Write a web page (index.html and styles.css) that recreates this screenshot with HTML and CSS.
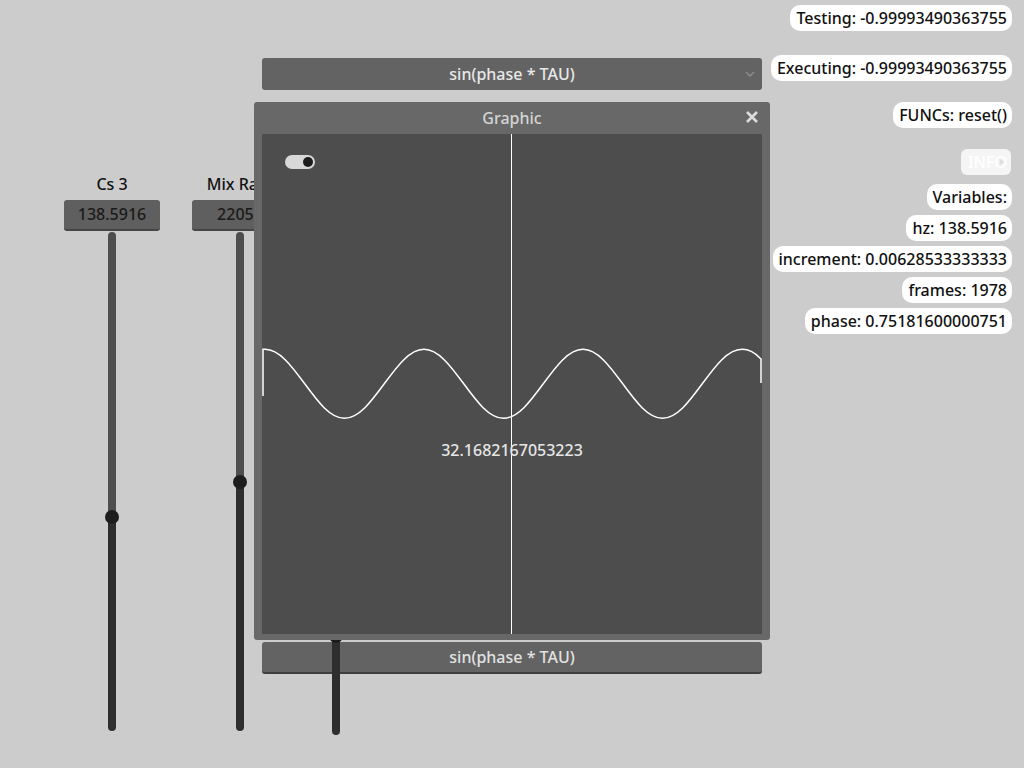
FILE: index.html
```html
<!DOCTYPE html>
<html>
<head>
<meta charset="utf-8">
<link rel="stylesheet" href="styles.css">
</head>
<body>
<div class="stage">
  <div class="layer center-layer">
    <div class="dropdown">
      <span class="dd-text">sin(phase * TAU)</span>
      <svg class="chevron" width="10" height="6" viewBox="0 0 10 6"><path d="M1 1 L5 5 L9 1" fill="none" stroke="#8c8c8c" stroke-width="1.5"/></svg>
    </div>
    <div class="bottom-btn">sin(phase * TAU)</div>
  </div>

  <div class="layer sliders-layer">
    <div class="slider-group">
      <div class="s-label">Cs 3</div>
      <div class="s-value">138.5916</div>
      <div class="track">
        <div class="track-upper" style="height:285px"></div>
        <div class="knob"></div>
        <div class="track-lower"></div>
      </div>
    </div>
    <div class="slider-group g2">
      <div class="s-label">Mix Rate</div>
      <div class="s-value">22050</div>
      <div class="track">
        <div class="track-upper" style="height:250px"></div>
        <div class="knob"></div>
        <div class="track-lower"></div>
      </div>
    </div>
    <div class="slider-group g3">
      <div class="s-label">Amp</div>
      <div class="s-value">0.5</div>
      <div class="track">
        <div class="track-upper" style="height:400px"></div>
        <div class="knob"></div>
        <div class="track-lower"></div>
      </div>
    </div>
  </div>

  <div class="layer info-layer">
    <div class="pill p-testing">Testing: -0.99993490363755</div>
    <div class="pill p-exec">Executing: -0.99993490363755</div>
    <div class="pill p-funcs">FUNCs: reset()</div>
    <div class="pill p-info"><span class="info-text">INFO</span><svg class="info-ic" width="6" height="8" viewBox="0 0 6 8"><path d="M0.5 0.5 L5.5 4 L0.5 7.5 Z" fill="#dedede"/></svg></div>
    <div class="pill p-vars">Variables:</div>
    <div class="pill p-var">hz: 138.5916</div>
    <div class="pill p-var">increment: 0.00628533333333</div>
    <div class="pill p-var">frames: 1978</div>
    <div class="pill p-var">phase: 0.75181600000751</div>
  </div>

  <div class="window">
    <div class="win-title">
      <span>Graphic</span>
      <svg class="close" width="14" height="14" viewBox="0 0 14 14"><path d="M2 2 L12 12 M12 2 L2 12" stroke="#dcdcdc" stroke-width="2.6" stroke-linecap="butt"/></svg>
    </div>
    <div class="panel">
      <svg class="plot" width="500" height="500" viewBox="262 134 500 500">
        <line x1="511.5" y1="134" x2="511.5" y2="634" stroke="#ffffff" stroke-width="1"/>
        <path d="M263 396 V349.3 H265 c14.39 0 26.77 16.81 39.75 34.5 s25.36 34.5 39.75 34.5 s26.77 -16.81 39.75 -34.5 s25.36 -34.5 39.75 -34.5 s26.77 16.81 39.75 34.5 s25.36 34.5 39.75 34.5 s26.77 -16.81 39.75 -34.5 s25.36 -34.5 39.75 -34.5 s26.77 16.81 39.75 34.5 s25.36 34.5 39.75 34.5 s26.77 -16.81 39.75 -34.5 s25.36 -34.5 39.75 -34.5 C748 349.3 755 352.5 761 359 V383" fill="none" stroke="#ffffff" stroke-width="1.5"/>
      </svg>
      <div class="toggle"><div class="toggle-knob"></div></div>
      <div class="readout">32.1682167053223</div>
    </div>
  </div>
</div>
</body>
</html>
```
FILE: styles.css
```css
html, body {
  margin: 0;
  padding: 0;
}
body {
  background: #cccccc;
  font-family: "Noto Sans", "Open Sans", sans-serif;
  font-size: 16px;
  font-weight: 500;
  color: #111111;
}
.stage {
  position: relative;
  width: 1024px;
  height: 768px;
  overflow: hidden;
  display: grid;
  grid-template-columns: 1024px;
  grid-template-rows: 768px;
}
.layer {
  grid-column: 1;
  grid-row: 1;
}

/* center column */
.center-layer {
  display: flex;
  flex-direction: column;
  padding: 58px 0 0 262px;
  width: 500px;
}
.dropdown {
  height: 32px;
  background: #636363;
  border-radius: 3px;
  display: flex;
  align-items: center;
  justify-content: center;
  position: relative;
  color: #e8e8e8;
}
.dd-text {
  line-height: 32px;
}
.chevron {
  position: absolute;
  right: 7px;
  top: 13px;
}
.bottom-btn {
  margin-top: 552px;
  height: 30px;
  line-height: 30px;
  text-align: center;
  background: #636363;
  border-bottom: 2px solid #3e3e3e;
  border-radius: 3px;
  color: #e2e2e2;
}

/* sliders */
.sliders-layer {
  display: flex;
  align-items: flex-start;
  padding: 172px 0 0 64px;
}
.slider-group {
  width: 96px;
  display: flex;
  flex-direction: column;
  align-items: center;
}
.g2 {
  margin-left: 32px;
}
.g3 {
  margin-top: 4px;
}
.s-label {
  height: 24px;
  line-height: 24px;
  color: #111111;
  white-space: nowrap;
}
.s-value {
  margin-top: 4px;
  width: 96px;
  height: 29px;
  line-height: 29px;
  text-align: center;
  font-size: 16px;
  background: #5f5f5f;
  border-bottom: 2px solid #454545;
  border-radius: 3px;
  color: #1a1a1a;
}
.track {
  margin-top: 1px;
  width: 8px;
  height: 499px;
  display: flex;
  flex-direction: column;
  align-items: center;
  border-radius: 4px;
}
.track-upper {
  width: 8px;
  background: #4e4e4e;
  border-radius: 4px 4px 0 0;
  flex-shrink: 0;
}
.knob {
  width: 14px;
  height: 14px;
  margin: -7px 0;
  border-radius: 50%;
  background: #1d1d1d;
  flex-shrink: 0;
  position: relative;
  z-index: 1;
}
.track-lower {
  width: 8px;
  flex: 1;
  background: #2e2e2e;
  border-radius: 0 0 4px 4px;
}

/* right info column */
.info-layer {
  display: flex;
  flex-direction: column;
  align-items: flex-end;
  padding: 5px 12px 0 0;
}
.pill {
  height: 26px;
  line-height: 26px;
  padding: 0 5px 0 6px;
  background: #ffffff;
  border-radius: 10px;
  color: #111111;
  white-space: nowrap;
}
.p-exec { margin-top: 24px; }
.p-funcs { margin-top: 21px; }
.p-info {
  margin-top: 21px;
  margin-right: 1px;
  background: #f5f5f5;
  color: #ffffff;
  position: relative;
  padding: 0 4px 0 7px;
  border-radius: 6px;
}
.info-ic {
  position: absolute;
  right: 6px;
  top: 9px;
}
.p-vars { margin-top: 9px; }
.p-var { margin-top: 5px; }

/* floating window */
.window {
  position: absolute;
  left: 254px;
  top: 102px;
  width: 516px;
  height: 538px;
  background: #686868;
  border-radius: 3px;
  display: flex;
  flex-direction: column;
  z-index: 5;
}
.win-title {
  height: 31px;
  padding-bottom: 1px;
  display: flex;
  align-items: center;
  justify-content: center;
  position: relative;
  color: #d4d4d4;
}
.close {
  position: absolute;
  right: 11px;
  top: 8px;
}
.panel {
  margin: 0 8px;
  width: 500px;
  height: 500px;
  background: #4d4d4d;
  position: relative;
}
.plot {
  position: absolute;
  left: 0;
  top: 0;
}
.toggle {
  position: absolute;
  left: 23px;
  top: 21px;
  width: 30px;
  height: 14px;
  border-radius: 7px;
  background: #d8d8d8;
}
.toggle-knob {
  position: absolute;
  left: 18px;
  top: 2px;
  width: 10px;
  height: 10px;
  border-radius: 50%;
  background: #1c1c1c;
}
.readout {
  position: absolute;
  left: 0;
  right: 0;
  top: 304px;
  text-align: center;
  line-height: 24px;
  color: #e6e6e6;
}
```
